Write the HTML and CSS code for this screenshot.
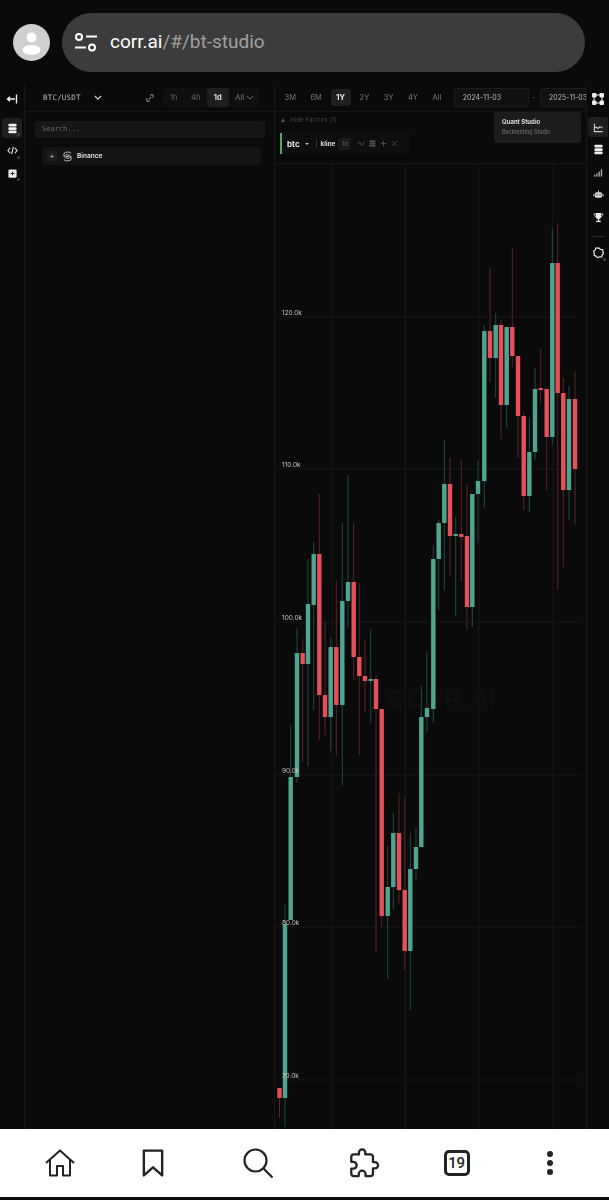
FILE: index.html
```
<!DOCTYPE html>
<html lang="en">
<head>
    <title>corr.ai - Backtesting Studio</title>
    <link rel="stylesheet" href="styles.css">
</head>
<body>
    <header class="browser-bar">
        <svg class="avatar" viewBox="0 0 37 37">
            <circle cx="18.5" cy="18.5" r="18.5" fill="#cfcfcf"/>
            <circle cx="18.5" cy="13.5" r="5" fill="#fff"/>
            <ellipse cx="18.5" cy="26" rx="9" ry="5" fill="#fff"/>
        </svg>
        <div class="url-pill">
            <svg class="tune-icon" viewBox="0 0 24 20" fill="none" stroke="#fff" stroke-width="2">
                <circle cx="5" cy="5" r="3"/>
                <path d="M12 4.500h11M1 15.500h11"/>
                <circle cx="18" cy="15.500" r="3"/>
            </svg>
            <span class="url-text">corr.ai<span class="url-path">/#/bt-studio</span></span>
        </div>
    </header>

    <div class="app">
        <nav class="rail rail-left">
            <svg class="rail-icon collapse-icon" viewBox="0 0 12 12" fill="none" stroke="#eee" stroke-width="1.400">
                <path d="M10.500 1.500v9M9 6H1.500M4 3.800 1.500 6 4 8.200"/>
            </svg>
            <div class="rail-btn rail-btn-active">
                <svg viewBox="0 0 12 12" fill="#eee"><rect x="1.500" y="0.800" width="9" height="3" rx="1.200"/><rect x="1.500" y="4.500" width="9" height="3" rx="1"/><rect x="1.500" y="8.200" width="9" height="3" rx="1.200"/></svg>
                <i class="dot"></i>
            </div>
            <div class="rail-btn">
                <svg viewBox="0 0 12 12" fill="none" stroke="#eee" stroke-width="1.200"><path d="M3.500 3 1 6l2.500 3M8.500 3 11 6 8.500 9M7 2 5 10"/></svg>
                <i class="dot"></i>
            </div>
            <div class="rail-btn">
                <svg viewBox="0 0 12 12"><rect x="1.500" y="1.500" width="9" height="9" rx="1.500" fill="#eee"/><path d="M4 6h4M6 4v4" stroke="#222" stroke-width="1.200"/></svg>
                <i class="dot"></i>
            </div>
        </nav>

        <section class="market-panel">
            <div class="market-head">
                <span class="pair">BTC/USDT</span>
                <svg class="chevron pair-chevron" viewBox="0 0 10 6" fill="none" stroke="#ddd" stroke-width="1.400"><path d="m1 1 4 4 4-4"/></svg>
                <svg class="link-icon" viewBox="0 0 12 12" fill="none" stroke="#888" stroke-width="1.300"><path d="M5 7.500 7.500 5M6.500 3l1-1a2 2 0 0 1 2.500 2.500l-1 1M5.500 9l-1 1A2 2 0 0 1 2 7.500l1-1"/></svg>
                <div class="interval-group">
                    <span class="interval">1h</span>
                    <span class="interval">4h</span>
                    <span class="interval interval-active">1d</span>
                    <span class="interval interval-all">All
                        <svg class="chevron" viewBox="0 0 10 6" fill="none" stroke="#777" stroke-width="1.100"><path d="m1 1 4 4 4-4"/></svg>
                    </span>
                </div>
            </div>
            <div class="search-box">Search...</div>
            <div class="exchange-row">
                <span class="expand-btn">+</span>
                <svg class="binance-icon" viewBox="0 0 14 14" fill="none" stroke="#ccc" stroke-width="1.200"><path d="M11.500 3C10 .8 4.500.8 2.800 2.800 1.500 4.500 3 6 5 6.500l4 1c2 .5 3.500 2 2.200 3.700C9.500 13.200 4 13.200 2.500 11M1.500 6l3 2.500 4.500 1M12.500 8l-3-2.500-4.500-1"/></svg>
                <span class="exchange-name">Binance</span>
            </div>
        </section>

        <main class="main-panel">
            <div class="range-row">
                <span class="range">3M</span>
                <span class="range">6M</span>
                <span class="range range-active">1Y</span>
                <span class="range">2Y</span>
                <span class="range">3Y</span>
                <span class="range">4Y</span>
                <span class="range">All</span>
                <span class="range-divider"></span>
                <span class="date-box">2024-11-03</span>
                <span class="date-sep">-</span>
                <span class="date-box date-box-cut">2025-11-03</span>
            </div>
            <div class="factor-toggle"><span class="triangle"></span>Hide Factors (1)</div>
            <div class="factor-row">
                <span class="factor-mark"></span>
                <span class="factor-name">btc</span>
                <span class="caret"></span>
                <span class="factor-divider"></span>
                <span class="factor-type">kline</span>
                <span class="factor-chip">1d</span>
                <svg class="mini-icon" viewBox="0 0 10 10" fill="none" stroke="#555" stroke-width="1"><path d="M1 6c1-4 2-4 3-1s2 3 4-2"/></svg>
                <svg class="mini-icon" viewBox="0 0 10 10" fill="#4a4a4a"><rect x="1.500" y="1.500" width="7" height="2" rx=".8"/><rect x="1.500" y="4" width="7" height="2" rx=".8"/><rect x="1.500" y="6.500" width="7" height="2" rx=".8"/></svg>
                <svg class="mini-icon" viewBox="0 0 10 10" stroke="#555" stroke-width="1"><path d="M5 2v6M2 5h6"/></svg>
                <svg class="mini-icon" viewBox="0 0 10 10" stroke="#555" stroke-width="1"><path d="m2.500 2.500 5 5M7.500 2.500l-5 5"/></svg>
            </div>
            <svg id="chart" class="chart" viewBox="275 163 311 966"></svg>

            <div class="tooltip">
                <div class="tooltip-title">Quant Studio</div>
                <div class="tooltip-sub">Backtesting Studio</div>
            </div>
        </main>

        <nav class="rail rail-right">
            <svg class="rail-icon studio-icon" viewBox="0 0 14 14" fill="#eee">
                <rect x="1" y="1" width="4.500" height="4.500" rx="1.200"/><rect x="8.500" y="1" width="4.500" height="4.500" rx="1.200"/>
                <rect x="1" y="8.500" width="4.500" height="4.500" rx="1.200"/><rect x="8.500" y="8.500" width="4.500" height="4.500" rx="1.200"/>
                <path d="M5 3h4M5 11h4M3 5v4M11 5v4" stroke="#eee"/>
            </svg>
            <div class="rail-btn rail-btn-active">
                <svg viewBox="0 0 12 12" fill="none" stroke="#ccc" stroke-width="1.200"><path d="M1.500 1.500v9h9M1.500 7l2-1.500 2 1.500 2-2 3 1.500"/></svg>
            </div>
            <div class="rail-btn">
                <svg viewBox="0 0 12 12" fill="#eee"><rect x="1.500" y="0.800" width="9" height="3" rx="1.200"/><rect x="1.500" y="4.500" width="9" height="3" rx="1"/><rect x="1.500" y="8.200" width="9" height="3" rx="1.200"/></svg>
            </div>
            <div class="rail-btn">
                <svg viewBox="0 0 12 12" fill="#aaa"><rect x="1" y="8.500" width="1.500" height="2"/><rect x="3.500" y="7" width="1.500" height="3.500"/><rect x="6" y="5" width="1.500" height="5.500"/><rect x="8.500" y="2.500" width="1.500" height="8"/></svg>
            </div>
            <div class="rail-btn">
                <svg viewBox="0 0 12 12" fill="#ddd"><rect x="2" y="3.500" width="8" height="6" rx="2"/><rect x="0.500" y="5.500" width="1" height="2.500"/><rect x="10.500" y="5.500" width="1" height="2.500"/><path d="M5.500 1.500h1v2h-1z"/><circle cx="4.300" cy="6.300" r=".8" fill="#222"/><circle cx="7.700" cy="6.300" r=".8" fill="#222"/></svg>
            </div>
            <div class="rail-btn">
                <svg viewBox="0 0 12 12" fill="#eee"><path d="M3 1h6v3.500a3 3 0 0 1-6 0z"/><path d="M3 2H1.200c0 2 .7 3 2 3.300M9 2h1.800c0 2-.7 3-2 3.300" fill="none" stroke="#eee" stroke-width=".8"/><rect x="5.300" y="7" width="1.400" height="2.500"/><rect x="3.500" y="9.500" width="5" height="1.500"/></svg>
            </div>
            <span class="rail-divider"></span>
            <div class="rail-btn">
                <svg viewBox="0 0 12 12" fill="none" stroke="#ddd" stroke-width="1.400"><path d="M6 .9 8 2.500l2.500.2.3 2.500L11.500 7 10 8.500l-.5 2.300-2.500-.1-2 1-1.700-1.700-2-.7.100-2.500L.7 4.700l1.800-1.500.5-2z"/></svg>
                <i class="dot"></i>
            </div>
        </nav>
    </div>

    <footer class="bottom-nav">
        <svg class="nav-icon" viewBox="0 0 30 28" fill="none" stroke="#222" stroke-width="2" stroke-linejoin="round">
            <path d="M1 14 15 1.500 29 14M5 11v15.500h7V17h6v9.500h7V11"/>
        </svg>
        <svg class="nav-icon" viewBox="0 0 20 26" fill="none" stroke="#222" stroke-width="2.200" stroke-linejoin="round">
            <path d="M1.500 1.500h17v23L10 17l-8.500 7.500z"/>
        </svg>
        <svg class="nav-icon nav-search" viewBox="0 0 30 30" fill="none" stroke="#222" stroke-width="2.200">
            <circle cx="12.500" cy="12.500" r="11"/>
            <path d="m20.500 20.500 9 9"/>
        </svg>
        <svg class="nav-icon nav-puzzle" viewBox="1 0 23.500 23.500" fill="none" stroke="#222" stroke-width="1.800" stroke-linejoin="round">
            <path d="M20.500 11H19V7c0-1.100-.9-2-2-2h-4V3.500C13 2.120 11.880 1 10.500 1S8 2.120 8 3.500V5H4c-1.100 0-1.990.9-1.990 2v3.800H3.500c1.490 0 2.700 1.210 2.700 2.700s-1.210 2.700-2.700 2.700H2V20c0 1.100.9 2 2 2h3.800v-1.500c0-1.490 1.210-2.700 2.700-2.700 1.490 0 2.700 1.210 2.700 2.700V22H17c1.100 0 2-.9 2-2v-4h1.500c1.380 0 2.500-1.120 2.500-2.500S21.880 11 20.500 11z"/>
        </svg>
        <span class="tab-count">19</span>
        <span class="menu-dots"><i></i><i></i><i></i></span>
    </footer>

    <script>
        // x, body top, body bottom, wick top, wick bottom, colour
        const candles = [
            [279.5, 1088, 1098, 1088, 1118, "r"], [285, 924, 1098, 904, 1127, "g"],
            [290.7, 777, 920, 725, 920, "g"], [297, 653, 777, 628, 783, "g"],
            [302.7, 653, 664, 639, 762, "r"], [308, 604, 664, 559, 766, "g"],
            [313.7, 554, 605, 542, 710, "g"], [319.3, 554, 695, 494, 740, "r"],
            [325, 695, 717, 622, 735, "r"], [330.7, 647, 717, 638, 751, "g"],
            [336.3, 647, 705, 581, 756, "r"], [342.3, 601, 705, 523, 785, "g"],
            [348, 582, 601, 475, 628, "g"], [353.7, 582, 657, 523, 680, "r"],
            [359.3, 657, 676, 583, 755, "r"], [365, 676, 681, 640, 712, "r"],
            [370.7, 679, 681, 629, 723, "g"], [376, 679, 709, 675, 953, "r"],
            [381.7, 709, 916, 709, 927, "r"], [387.7, 887, 916, 846, 979, "g"],
            [393.3, 833, 887, 813, 909, "g"], [399, 833, 890, 793, 903, "r"],
            [404.7, 890, 951, 797, 970, "r"], [410.3, 869, 951, 833, 1010, "g"],
            [416, 847, 869, 827, 880, "g"], [421.3, 717, 847, 686, 847, "g"],
            [427, 708, 717, 653, 732, "g"], [433.3, 559, 709, 545, 723, "g"],
            [438.7, 523, 559, 520, 610, "g"], [444.3, 484, 523, 440, 591, "g"],
            [450, 484, 536, 458, 575, "r"], [455.7, 534, 536, 517, 616, "g"],
            [461.3, 534, 537, 460, 582, "r"], [467, 536, 607, 485, 630, "r"],
            [472.3, 494, 607, 494, 627, "g"], [478, 481, 494, 461, 543, "g"],
            [484.3, 331, 481, 325, 508, "g"], [490, 331, 358, 267, 382, "r"],
            [495.7, 325, 358, 313, 398, "g"], [501, 325, 405, 320, 439, "r"],
            [506.7, 327, 405, 327, 428, "g"], [512.3, 327, 356, 248, 367, "r"],
            [518, 356, 416, 356, 458, "r"], [523.7, 416, 496, 413, 510, "r"],
            [529.3, 452, 496, 417, 512, "g"], [535, 389, 452, 368, 460, "g"],
            [540.7, 388, 390, 348, 403, "r"], [546.7, 389, 437, 389, 490, "r"],
            [552.3, 263, 437, 229, 445, "g"], [557.7, 263, 393, 223, 590, "r"],
            [563.3, 393, 490, 378, 567, "r"], [569, 399, 490, 386, 520, "g"],
            [575, 399, 469, 371, 525, "r"]
        ];
        const levels = [[317, "120.0k"], [469, "110.0k"], [622, "100.0k"], [775, "90.0k"], [927, "80.0k"], [1080, "70.0k"]];

        let svg = `<line class="grid" x1="275" x2="586" y1="163.5" y2="163.5"/>`;
        for (const x of [332, 405.5, 479, 553]) {
            svg += `<line class="grid" x1="${x}" x2="${x}" y1="163" y2="1129"/>`;
        }
        for (const [y] of levels) {
            svg += `<line class="grid" x1="275" x2="581" y1="${y}" y2="${y}"/>`;
        }
        svg += `<text class="watermark" x="442" y="708">CORR.AI</text>`;
        for (const [x, top, bottom, high, low, side] of candles) {
            svg += `<line class="wick-${side}" x1="${x}" x2="${x}" y1="${high}" y2="${low}"/>`;
            svg += `<rect class="body-${side}" x="${x - 2.2}" y="${top}" width="4.4" height="${bottom - top}"/>`;
        }
        for (const [y, label] of levels) {
            svg += `<text class="axis-label" x="282" y="${y - 2}">${label}</text>`;
        }
        document.getElementById("chart").innerHTML = svg;
    </script>
</body>
</html>
```

FILE: styles.css
```
body {
    margin: 0;
    width: 609px;
    height: 1200px;
    overflow: hidden;
    background-color: #0a0a0b;
    font-family: Inter, "Liberation Sans", sans-serif;
    color: #ddd;
}

.browser-bar {
    display: flex;
    align-items: center;
    height: 84px;
    padding-left: 13px;
    box-sizing: border-box;
}

.avatar {
    width: 37px;
    height: 37px;
    margin: 0 12px 0 0;
}

.url-pill {
    display: flex;
    align-items: center;
    width: 523px;
    height: 59px;
    border-radius: 30px;
    background-color: #3c3c3c;
}

.tune-icon {
    width: 24px;
    height: 20px;
    margin-left: 12px;
}

.url-text {
    margin: 0 0 2px 12px;
    font-family: Roboto, sans-serif;
    font-size: 19px;
    color: #fff;
}

.url-path {
    color: #a0a0a0;
}

.app {
    display: flex;
    height: 1045px;
    will-change: transform;
}

.rail {
    display: flex;
    flex-direction: column;
    align-items: center;
    flex: none;
    box-sizing: border-box;
}

.rail-left {
    width: 25px;
    padding-top: 9px;
    border-right: 1px solid #171718;
}

.rail-left .rail-icon {
    margin-bottom: 13px;
}

.rail-right {
    width: 23px;
    padding-top: 8px;
    border-left: 1px solid #171718;
}

.rail-icon {
    width: 12px;
    height: 12px;
}

.rail-right .studio-icon {
    width: 14px;
    height: 14px;
    margin-bottom: 11px;
}

.rail-btn {
    position: relative;
    display: flex;
    align-items: center;
    justify-content: center;
    width: 20px;
    height: 20px;
    margin-bottom: 2.500px;
    border-radius: 3px;
}

.rail-btn svg {
    width: 11px;
    height: 11px;
}

.rail-btn-active {
    background-color: #1f1f20;
}

.dot {
    position: absolute;
    right: 2px;
    bottom: 2px;
    width: 3px;
    height: 3px;
    border-radius: 50%;
    background-color: #2c4a42;
}

.rail-divider {
    width: 13px;
    height: 1px;
    margin: 6px 0 6px;
    background-color: #2a2a2b;
}

.market-panel {
    flex: none;
    width: 250px;
    box-sizing: border-box;
    border-right: 1px solid #171718;
}

.market-head {
    display: flex;
    align-items: center;
    height: 28px;
    box-sizing: border-box;
    padding-left: 18px;
    border-bottom: 1px solid #141415;
}

.pair {
    font-family: "DejaVu Sans Mono", monospace;
    font-size: 7.500px;
    letter-spacing: 0.2px;
    color: #b8b8b8;
}

.chevron {
    width: 8px;
    height: 5px;
}

.pair-chevron {
    margin-left: 13px;
}

.link-icon {
    width: 10px;
    height: 10px;
    margin-left: 43px;
}

.interval-group {
    display: flex;
    align-items: center;
    height: 19px;
    margin-left: 8px;
    border-radius: 3px;
    background-color: #0f0f10;
}

.interval {
    display: flex;
    align-items: center;
    justify-content: center;
    width: 22px;
    height: 19px;
    font-size: 7.500px;
    color: #666;
    border-radius: 3px;
}

.interval-active {
    background-color: #1f1f20;
    color: #ddd;
    font-weight: 700;
}

.interval-all {
    width: 28px;
    padding-left: 2px;
    gap: 2px;
    color: #777;
}

.search-box {
    height: 17px;
    margin: 9px 9px 0 10px;
    padding-left: 7px;
    line-height: 16px;
    border-radius: 2px;
    background-color: #161617;
    font-family: "DejaVu Sans Mono", monospace;
    font-size: 7px;
    color: #6a6a6a;
}

.exchange-row {
    display: flex;
    align-items: center;
    height: 18px;
    margin: 9px 13px 0 17px;
    padding-left: 5px;
    border-radius: 3px;
    background-color: #141415;
    font-size: 6.500px;
}

.expand-btn {
    width: 10px;
    height: 10px;
    line-height: 10px;
    text-align: center;
    border-radius: 2px;
    background-color: #1e1e1f;
    font-size: 7px;
}

.binance-icon {
    width: 11px;
    height: 11px;
    margin-left: 5px;
}

.exchange-name {
    margin-left: 4px;
    font-weight: 600;
    color: #e0e0e0;
}

.main-panel {
    position: relative;
    flex: none;
    width: 311px;
    overflow: hidden;
}

.range-row {
    display: flex;
    align-items: center;
    gap: 3.500px;
    height: 28px;
    box-sizing: border-box;
    padding-left: 4px;
    border-bottom: 1px solid #141415;
}

.range {
    padding: 0 5.500px;
    line-height: 17px;
    font-size: 7.500px;
    color: #777;
    border-radius: 3px;
}

.range-active {
    background-color: #1f1f20;
    color: #eee;
    font-weight: 700;
}

.range-divider {
    width: 1px;
    height: 11px;
    background-color: #1c1c1d;
}

.date-box {
    flex: none;
    width: 75px;
    height: 19px;
    box-sizing: border-box;
    padding-left: 8px;
    line-height: 18px;
    font-size: 7px;
    color: #bbb;
    border: 1px solid #1c1c1d;
    border-radius: 3px;
    background-color: #111112;
}

.date-sep {
    margin: 0 1px 0 0;
    font-size: 7px;
    color: #666;
}

.factor-toggle {
    display: flex;
    align-items: center;
    height: 16px;
    padding: 0 0 5px 6px;
    font-size: 6.300px;
    color: #444;
}

.triangle {
    width: 0;
    height: 0;
    margin-right: 5px;
    border-left: 2.500px solid transparent;
    border-right: 2.500px solid transparent;
    border-bottom: 4px solid #555;
}

.factor-row {
    display: flex;
    align-items: center;
    width: 130px;
    height: 21px;
    margin: 0 0 9px 5px;
    background-color: #0e0e0f;
}

.factor-mark {
    width: 2px;
    height: 21px;
    margin-right: 5px;
    background-color: #55a860;
}

.factor-name {
    font-size: 8px;
    font-weight: 700;
    color: #eee;
}

.caret {
    width: 0;
    height: 0;
    margin: 0 7px 0 5px;
    border-left: 2px solid transparent;
    border-right: 2px solid transparent;
    border-top: 2.500px solid #bbb;
}

.factor-divider {
    width: 1px;
    height: 9px;
    margin-right: 4px;
    background-color: #333;
}

.factor-type {
    font-size: 6.300px;
    font-weight: 700;
    color: #ddd;
}

.factor-chip {
    width: 13px;
    margin: 0 6px 0 3px;
    line-height: 12px;
    text-align: center;
    border-radius: 2px;
    background-color: #1a1a1b;
    font-size: 6px;
    color: #666;
}

.mini-icon {
    width: 9px;
    height: 9px;
    margin-right: 2px;
}

.chart {
    display: block;
    width: 311px;
    height: 966px;
}

.grid {
    stroke: #171718;
    stroke-width: 1;
}

.wick-g {
    stroke: #1f4a40;
    stroke-width: 1;
}

.wick-r {
    stroke: #57242a;
    stroke-width: 1;
}

.body-g {
    fill: #4fa58f;
}

.body-r {
    fill: #e5505a;
}

.axis-label {
    font-size: 6.500px;
    fill: #c8c8c8;
}

.watermark {
    font-size: 26px;
    font-weight: 700;
    text-anchor: middle;
    fill: #0e0e0f;
}

.tooltip {
    position: absolute;
    top: 28px;
    left: 219px;
    width: 87px;
    height: 31px;
    box-sizing: border-box;
    padding: 6px 8px;
    border-radius: 3px;
    background-color: #1c1c1d;
}

.tooltip-title {
    font-size: 6px;
    font-weight: 700;
    color: #ddd;
}

.tooltip-sub {
    margin-top: 4px;
    font-size: 5.500px;
    color: #777;
}

.bottom-nav {
    display: grid;
    grid-template-columns: 92px 93px 118px 95px 89px 97px;
    align-items: center;
    justify-items: center;
    height: 68px;
    padding-left: 14px;
    background-color: #fff;
}

.nav-icon {
    width: 30px;
    height: 28px;
}

.nav-search {
    height: 30px;
}

.nav-puzzle {
    height: 30px;
}

.tab-count {
    width: 26px;
    height: 26px;
    box-sizing: border-box;
    line-height: 20px;
    text-align: center;
    border: 3px solid #222;
    border-radius: 5px;
    font-family: Roboto, sans-serif;
    font-size: 15px;
    font-weight: 500;
    letter-spacing: -0.3px;
    color: #222;
}

.menu-dots {
    display: flex;
    flex-direction: column;
    gap: 3px;
}

.menu-dots i {
    width: 6px;
    height: 6px;
    border-radius: 50%;
    background-color: #222;
}
```
